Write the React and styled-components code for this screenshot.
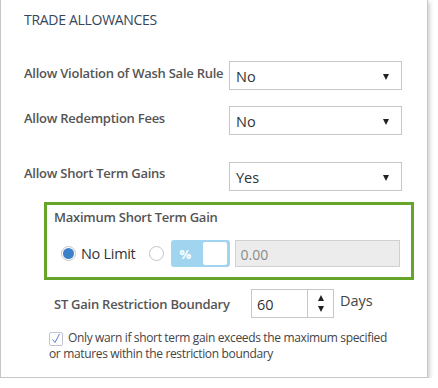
import React from "react";
import styled, { createGlobalStyle } from "styled-components";

const Global = createGlobalStyle`
  html, body { margin: 0; padding: 0; background: #ffffff; }
  body { font-family: "Open Sans", "Noto Sans", Arial, sans-serif; }
  * { box-sizing: border-box; }
`;

const Panel = styled.div`
  width: 428px;
  height: 378px;
  background: #fff;
  border: 1px solid #c6c6c6;
  border-top: none;
  box-shadow: 2px 2px 4px rgba(0, 0, 0, 0.18);
  padding: 10px 0 0 23px;
  display: flex;
  flex-direction: column;
`;

const Title = styled.div`
  font-size: 14px;
  line-height: 20px;
  color: #34465a;
  letter-spacing: -0.3px;
  height: 51px;
`;

const Row = styled.div`
  display: grid;
  grid-template-columns: 205px 173px;
  align-items: start;
  margin-bottom: ${(p) => p.$gap || 16}px;
`;

const Label = styled.div`
  font-size: 13px;
  font-weight: 600;
  color: #555;
  line-height: 18px;
  padding-top: ${(p) => p.$pt ?? 3}px;
  letter-spacing: -0.25px;
  white-space: nowrap;
`;

const Select = styled.div`
  height: 29px;
  border: 1px solid #c8c8c8;
  display: flex;
  align-items: center;
  justify-content: space-between;
  padding: 2px 12px 0 6px;
  font-size: 14.5px;
  color: #333;
`;

const Caret = styled.span`
  width: 0;
  height: 0;
  border-left: 3.5px solid transparent;
  border-right: 3.5px solid transparent;
  border-top: 6px solid #222;
`;

const GreenBox = styled.div`
  margin-left: 20px;
  width: 370px;
  height: 78px;
  border: 3px solid #67a52a;
  padding: 3px 0 0 7px;
`;

const BoxTitle = styled.div`
  font-size: 13px;
  font-weight: 600;
  color: #555;
  line-height: 18px;
  letter-spacing: -0.25px;
`;

const Controls = styled.div`
  display: flex;
  align-items: center;
  margin-top: 14px;
  padding-left: 7px;
`;

const Radio = styled.span`
  width: 15px;
  height: 15px;
  border-radius: 50%;
  border: 1px solid #c4c4c4;
  background: #fff;
  display: inline-flex;
  align-items: center;
  justify-content: center;
  flex: none;
  &::after {
    content: "";
    width: 11px;
    height: 11px;
    border-radius: 50%;
    background: ${(p) => (p.$checked ? "#3c80c9" : "transparent")};
  }
`;

const RadioText = styled.span`
  font-size: 14.5px;
  color: #333;
  margin-left: 5px;
  margin-right: 13px;
  letter-spacing: -0.3px;
`;

const Toggle = styled.div`
  margin-left: 7px;
  width: 59px;
  height: 27px;
  border-radius: 3px;
  background: #a0d4ef;
  display: flex;
  align-items: center;
  justify-content: space-between;
  padding: 0 3px 0 9px;
  color: #fff;
  font-weight: 700;
  font-size: 13px;
`;

const Knob = styled.span`
  width: 24px;
  height: 23px;
  border-radius: 2px;
  background: #fff;
`;

const AmountInput = styled.div`
  margin-left: 5px;
  width: 165px;
  height: 27px;
  background: #ececec;
  border: 1px solid #d0d0d0;
  color: #8a8a8a;
  font-size: 14px;
  display: flex;
  align-items: center;
  padding: 1px 0 0 5px;
`;

const StRow = styled.div`
  display: flex;
  align-items: flex-start;
  margin-top: 9px;
  padding-left: 30px;
`;

const StLabel = styled(Label)`
  width: 197px;
  padding-top: 6px;
`;

const Spinner = styled.div`
  width: 83px;
  height: 29px;
  border: 1px solid #c8c8c8;
  display: flex;
`;

const SpinValue = styled.div`
  width: 56px;
  border-right: 1px solid #c8c8c8;
  font-size: 14.5px;
  color: #333;
  display: flex;
  align-items: center;
  padding: 2px 0 0 5px;
`;

const SpinArrows = styled.div`
  flex: 1;
  display: flex;
  flex-direction: column;
  align-items: center;
  justify-content: center;
  gap: 5px;
`;

const Tri = styled.span`
  width: 0;
  height: 0;
  border-left: 3.5px solid transparent;
  border-right: 3.5px solid transparent;
  ${(p) =>
    p.$up ? "border-bottom: 6px solid #222;" : "border-top: 6px solid #222;"}
`;

const Unit = styled.div`
  font-size: 14.5px;
  color: #444;
  margin-left: 6px;
  line-height: 20px;
  padding-top: 2px;
`;

const CheckRow = styled.div`
  margin-top: 12px;
  padding-left: 25px;
  font-size: 12px;
  color: #444;
  line-height: 16px;
  width: 400px;
  letter-spacing: -0.35px;
`;

const Line = styled.span`
  display: block;
  white-space: nowrap;
`;

const Check = styled.span`
  display: inline-flex;
  vertical-align: -2px;
  width: 14px;
  height: 14px;
  border: 1px solid #c4c4d4;
  border-radius: 2px;
  margin-right: 5px;
  align-items: center;
  justify-content: center;
`;

export default function App() {
  return (
    <>
      <Global />
      <Panel>
        <Title>TRADE ALLOWANCES</Title>
        <Row>
          <Label>Allow Violation of Wash Sale Rule</Label>
          <Select>
            No <Caret />
          </Select>
        </Row>
        <Row $gap={27}>
          <Label>Allow Redemption Fees</Label>
          <Select>
            No <Caret />
          </Select>
        </Row>
        <Row $gap={11}>
          <Label $pt={2}>Allow Short Term Gains</Label>
          <Select>
            Yes <Caret />
          </Select>
        </Row>
        <GreenBox>
          <BoxTitle>Maximum Short Term Gain</BoxTitle>
          <Controls>
            <Radio $checked />
            <RadioText>No Limit</RadioText>
            <Radio />
            <Toggle>
              %<Knob />
            </Toggle>
            <AmountInput>0.00</AmountInput>
          </Controls>
        </GreenBox>
        <StRow>
          <StLabel>ST Gain Restriction Boundary</StLabel>
          <Spinner>
            <SpinValue>60</SpinValue>
            <SpinArrows>
              <Tri $up />
              <Tri />
            </SpinArrows>
          </Spinner>
          <Unit>Days</Unit>
        </StRow>
        <CheckRow>
          <Line>
            <Check>
              <svg width="10" height="11" viewBox="0 0 10 11">
                <path d="M1.5 6.5 L4 9.5 L8.5 1" fill="none" stroke="#5a7fd6" strokeWidth="1" />
              </svg>
            </Check>
            Only warn if short term gain exceeds the maximum specified
          </Line>
          <Line>or matures within the restriction boundary</Line>
        </CheckRow>
      </Panel>
    </>
  );
}
